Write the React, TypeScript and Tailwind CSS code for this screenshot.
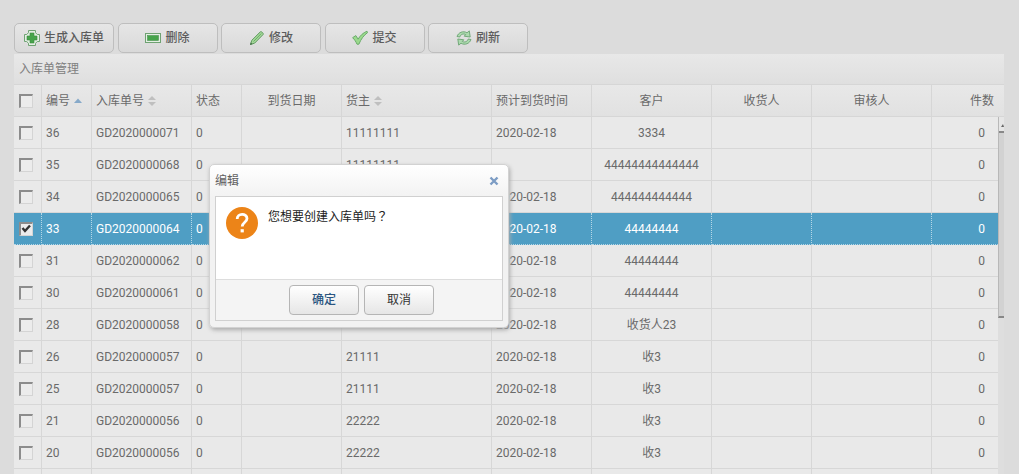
import { useState } from 'react';
import type { ReactNode } from 'react';
import clsx from 'clsx';

type Row = {
  id: number;
  code: string;
  owner?: string;
  eta?: string;
  customer: string;
};

const rows: Row[] = [
  { id: 36, code: 'GD2020000071', owner: '11111111', eta: '2020-02-18', customer: '3334' },
  { id: 35, code: 'GD2020000068', owner: '11111111', customer: '44444444444444' },
  { id: 34, code: 'GD2020000065', eta: '2020-02-18', customer: '444444444444' },
  { id: 33, code: 'GD2020000064', eta: '2020-02-18', customer: '44444444' },
  { id: 31, code: 'GD2020000062', eta: '2020-02-18', customer: '44444444' },
  { id: 30, code: 'GD2020000061', eta: '2020-02-18', customer: '44444444' },
  { id: 28, code: 'GD2020000058', eta: '2020-02-18', customer: '收货人23' },
  { id: 26, code: 'GD2020000057', owner: '21111', eta: '2020-02-18', customer: '收3' },
  { id: 25, code: 'GD2020000057', owner: '21111', eta: '2020-02-18', customer: '收3' },
  { id: 21, code: 'GD2020000056', owner: '22222', eta: '2020-02-18', customer: '收3' },
  { id: 20, code: 'GD2020000056', owner: '22222', eta: '2020-02-18', customer: '收3' },
];

const AddIcon = () => (
  <svg width="16" height="16" viewBox="0 0 16 16" aria-hidden="true">
    <path
      d="M4.5 .5h7v2.200l1.800 1.800h2.200v7h-2.200l-1.800 1.800v2.200h-7v-2.200l-1.800-1.800H.5v-7h2.200l1.800-1.800z"
      fill="#e4efe4"
      stroke="#6fa272"
    />
    <path d="M6 3h4v3h3v4h-3v3H6v-3H3V6h3z" fill="#46a44b" stroke="#3c8c41" strokeWidth=".6" />
  </svg>
);

const RemoveIcon = () => (
  <svg width="16" height="16" viewBox="0 0 16 16" aria-hidden="true">
    <rect x=".5" y="3.5" width="15" height="9" fill="#e4efe4" stroke="#6fa272" />
    <rect x="2.5" y="5.5" width="11" height="5" fill="#46a44b" stroke="#4c9350" strokeWidth=".6" />
  </svg>
);

const EditIcon = () => (
  <svg width="16" height="16" viewBox="0 0 16 16" aria-hidden="true">
    <path d="M1.5 14.5l1.3-4.2L11.4 1.8c.8-.8 3.6 1.6 2.7 2.7l-8.4 8.6z" fill="#a5d79b" stroke="#5f9a5f" />
    <path d="M4.5 11.5l7.8-8" stroke="#68b163" />
    <path d="M1 15l.8-2.4 1.7 1.5z" fill="#47704a" />
  </svg>
);

const SubmitIcon = () => (
  <svg width="16" height="16" viewBox="0 0 16 16" aria-hidden="true">
    <path
      d="M.6 7.700l3.200-2.100 2.300 3.600C8 5.900 11 2.800 15 1.200l.5 1.500C12 5 9 9 6.900 14.200H5C4 11.800 2.600 9.500 .6 7.700z"
      fill="#9bd98d"
      stroke="#6aac6a"
    />
  </svg>
);

const RefreshIcon = () => (
  <svg width="16" height="16" viewBox="0 0 16 16" aria-hidden="true">
    <g fill="#acd9ae" stroke="#6aa472" strokeWidth=".9" strokeLinejoin="round">
      <path d="M1 6.500C2.200 2.700 7 .3 11 2.800l2.300-1.900.9 6.100-6-.8 1.500-1.600C7.200 3.200 4.500 4.500 3.800 7z" />
      <path d="M15 9.500c-1.200 3.800-6 6.200-10 3.700l-2.300 1.900L1.800 9l6 .8-1.500 1.600c2.500 1.400 5.200.1 5.900-2.400z" />
    </g>
  </svg>
);

const SortIcon = ({ active = false }: { active?: boolean }) => (
  <svg width="10" height="12" viewBox="0 0 10 12" className="shrink-0" aria-hidden="true">
    {active ? (
      <path d="M1 8l4-4.500L9 8z" fill="#86a9c9" />
    ) : (
      <path d="M1 5l4-4 4 4zM1 7h8l-4 4z" fill="#bfbfbf" />
    )}
  </svg>
);

const tools = [
  { label: '生成入库单', icon: <AddIcon /> },
  { label: '删除', icon: <RemoveIcon /> },
  { label: '修改', icon: <EditIcon /> },
  { label: '提交', icon: <SubmitIcon /> },
  { label: '刷新', icon: <RefreshIcon /> },
];

type CheckProps = { label: string; checked: boolean; onChange: () => void };

const Check = ({ label, checked, onChange }: CheckProps) => (
  <label className="relative block size-3.5">
    <input
      type="checkbox"
      aria-label={label}
      checked={checked}
      onChange={onChange}
      className="peer block size-3.5 appearance-none border border-t-2 border-l-2 border-[#d4d4d4] border-t-[#8c8c8c] border-l-[#8c8c8c] bg-[#ececec]"
    />
    <svg
      viewBox="0 0 14 14"
      className="pointer-events-none absolute inset-0 hidden size-3.5 peer-checked:block"
      aria-hidden="true"
    >
      <path d="M3.500 6l2.500 3 5-5.500" fill="none" stroke="#333" strokeWidth="2.400" />
    </svg>
  </label>
);

type ThProps = { children?: ReactNode; className?: string; colSpan?: number };

const Th = ({ children, className, colSpan }: ThProps) => (
  <th
    colSpan={colSpan}
    className={clsx('h-8 border-r border-b border-[#d6d6d6] px-1 font-normal whitespace-nowrap last:border-r-0', className)}
  >
    {children}
  </th>
);

const App = () => {
  const [selected, setSelected] = useState<number[]>([33]);
  const [dialogOpen, setDialogOpen] = useState(true);

  const toggle = (id: number) =>
    setSelected((prev) => (prev.includes(id) ? prev.filter((v) => v !== id) : [...prev, id]));

  const allSelected = selected.length === rows.length;

  return (
    <div className="relative h-screen overflow-hidden bg-[#dcdcdc] pt-[23px] pr-[15px] pl-3.5 font-[Roboto,'Noto_Sans_CJK_SC',sans-serif] text-xs text-[#6a6a6a]">
      <div className="flex max-w-[514px] justify-between">
        {tools.map((tool) => (
          <button
            key={tool.label}
            type="button"
            onClick={() => tool.label === '生成入库单' && setDialogOpen(true)}
            className="flex h-[30px] w-[100px] items-center justify-center gap-1 rounded-[5px] border border-[#bebebe] bg-linear-to-b from-[#e6e6e6] to-[#d9d9d9] font-medium whitespace-nowrap text-[#5c5c5c]"
          >
            {tool.icon}
            {tool.label}
          </button>
        ))}
      </div>

      <section className="mt-px bg-[#e9e9e9]">
        <h1 className="h-[30px] bg-linear-to-b from-[#e8e8e8] to-[#dfdfdf] pl-[5px] leading-[30px] text-[#808080]">
          入库单管理
        </h1>
        <table className="w-full table-fixed border-separate border-spacing-0 border-t border-[#d6d6d6] leading-4">
          <colgroup>
            <col className="w-7" />
            <col className="w-[50px]" />
            <col className="w-[100px]" />
            <col className="w-[50px]" />
            <col className="w-[100px]" />
            <col className="w-[150px]" />
            <col className="w-[100px]" />
            <col className="w-[120px]" />
            <col className="w-[100px]" />
            <col className="w-[120px]" />
            <col />
            <col className="w-1.5" />
          </colgroup>
          <thead className="bg-linear-to-b from-[#e8e8e8] to-[#e1e1e1]">
            <tr>
              <Th className="pl-[5px]">
                <Check
                  label="全选"
                  checked={allSelected}
                  onChange={() => setSelected(allSelected ? [] : rows.map((row) => row.id))}
                />
              </Th>
              <Th>
                <span className="flex items-center gap-[3px]">
                  编号
                  <SortIcon active />
                </span>
              </Th>
              <Th>
                <span className="flex items-center gap-[3px]">
                  入库单号
                  <SortIcon />
                </span>
              </Th>
              <Th className="text-left">状态</Th>
              <Th className="text-center">到货日期</Th>
              <Th>
                <span className="flex items-center gap-[3px]">
                  货主
                  <SortIcon />
                </span>
              </Th>
              <Th className="text-left">预计到货时间</Th>
              <Th className="text-center">客户</Th>
              <Th className="text-center">收货人</Th>
              <Th className="text-center">审核人</Th>
              <Th className="pr-2.5 text-right" colSpan={2}>
                件数
              </Th>
            </tr>
          </thead>
          <tbody>
            {rows.map((row, i) => {
              const on = selected.includes(row.id);
              const td = clsx(
                'h-8 border-r border-b px-1 whitespace-nowrap',
                on ? 'border-dotted border-[#b5d7e7] bg-[#4f9ec4] text-white' : 'border-[#d7d7d7]',
              );
              return (
                <tr key={row.id}>
                  <td className={clsx(td, 'pl-[5px]')}>
                    <Check label={`选择 ${row.id}`} checked={on} onChange={() => toggle(row.id)} />
                  </td>
                  <td className={td}>{row.id}</td>
                  <td className={td}>{row.code}</td>
                  <td className={td}>0</td>
                  <td className={td} />
                  <td className={td}>{row.owner}</td>
                  <td className={td}>{row.eta}</td>
                  <td className={clsx(td, 'text-center')}>{row.customer}</td>
                  <td className={td} />
                  <td className={td} />
                  <td className={clsx(td, 'border-r-0 pr-[13px] text-right')}>0</td>
                  {/* scroll track runs beside the rows */}
                  {i === 0 && (
                    <td rowSpan={rows.length + 1} className="bg-[#dedede] p-0 align-top">
                      <div className="flex h-[201px] flex-col border-b-2 border-l border-[#b8b8b8] border-b-[#888] bg-[#d2d2d2]">
                        <span className="h-4 border-b-2 border-[#888] bg-[#e6e6e6]">
                          <svg width="5" height="14" viewBox="0 0 5 14" aria-hidden="true">
                            <path d="M2 10l2-3 1 3z" fill="#666" />
                          </svg>
                        </span>
                      </div>
                    </td>
                  )}
                </tr>
              );
            })}
            <tr>
              <td className="h-8 border-r border-[#d7d7d7]" />
              <td className="border-r border-[#d7d7d7]" />
              <td className="border-r border-[#d7d7d7]" />
              <td className="border-r border-[#d7d7d7]" />
              <td className="border-r border-[#d7d7d7]" />
              <td className="border-r border-[#d7d7d7]" />
              <td className="border-r border-[#d7d7d7]" />
              <td className="border-r border-[#d7d7d7]" />
              <td className="border-r border-[#d7d7d7]" />
              <td className="border-r border-[#d7d7d7]" />
              <td />
            </tr>
          </tbody>
        </table>
      </section>

      {dialogOpen && (
        <div
          role="dialog"
          aria-labelledby="dialog-title"
          className="absolute top-[164px] left-[209px] w-[300px] rounded-[5px] border border-[#d2d2d2] bg-linear-to-b from-white to-[#f2f2f2] to-20% px-[5px] pb-1.5 shadow-[1px_2px_4px_#aaa]"
        >
          <div className="flex h-[31px] items-center justify-between pr-1">
            <h2 id="dialog-title" className="text-[#606060]">
              编辑
            </h2>
            <button type="button" aria-label="关闭" onClick={() => setDialogOpen(false)}>
              <svg width="10" height="10" viewBox="0 0 10 10" className="block" aria-hidden="true">
                <path d="M1.500 1.500l7 7M8.500 1.500l-7 7" stroke="#7c9cc4" strokeWidth="2.400" />
              </svg>
            </button>
          </div>
          <div className="border border-[#d0d0d0] bg-white">
            <div className="flex h-[82px] items-start gap-2.5 px-2.5 pt-2.5">
              <svg width="32" height="32" viewBox="0 0 32 32" className="shrink-0" aria-hidden="true">
                <circle cx="16" cy="16" r="16" fill="#ec8418" />
                <path
                  d="M11.200 12c0-6 9.800-6 9.800-.4 0 3.700-4.800 3.700-4.800 8"
                  fill="none"
                  stroke="#fff"
                  strokeWidth="2.800"
                />
                <rect x="14.600" y="22.200" width="3.200" height="3.200" fill="#fff" />
              </svg>
              <p className="leading-[18px] text-[#222]">
                您想要创建入库单吗<span className="font-['Noto_Sans_CJK_TC',sans-serif]">？</span>
              </p>
            </div>
            <div className="flex h-[41px] items-center justify-center gap-[5px] border-t border-[#ddd] bg-[#f4f4f4] pl-[5px]">
              <button
                type="button"
                onClick={() => setDialogOpen(false)}
                className="h-[30px] w-[70px] rounded border border-[#b5b5b5] bg-linear-to-b from-white to-[#e6e6e6] font-medium text-[#2a5580]"
              >
                确定
              </button>
              <button
                type="button"
                onClick={() => setDialogOpen(false)}
                className="h-[30px] w-[70px] rounded border border-[#b5b5b5] bg-linear-to-b from-white to-[#e6e6e6] text-[#333]"
              >
                取消
              </button>
            </div>
          </div>
        </div>
      )}
    </div>
  );
};

export default App;
